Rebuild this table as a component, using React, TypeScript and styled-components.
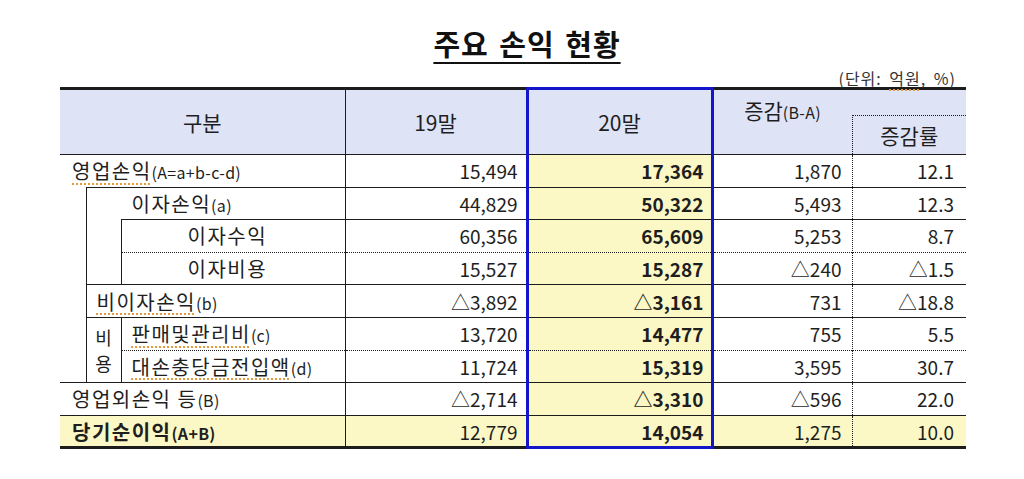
import React from 'react';
import styled, { createGlobalStyle } from 'styled-components';

const GlobalStyle = createGlobalStyle`
  html, body {
    margin: 0;
    padding: 0;
    background: #ffffff;
  }
  body {
    font-family: "Noto Sans CJK KR", "Noto Sans", sans-serif;
    color: #1e1e1e;
  }
`;

const LINE = '#1c1c1c';
const BLUE = '#1414c8';
const HEAD_BG = '#dee3f6';
const YELLOW = '#fbf8c6';

const Page = styled.div`
  width: 906px;
  padding: 24px 0 0 60px;
`;

const Title = styled.h1`
  margin: 0;
  height: 38px;
  line-height: 38px;
  padding-left: 28px;
  text-align: center;
  font-size: 29px;
  font-weight: 700;
  letter-spacing: 1px;
  word-spacing: 3px;
  color: #111;
  text-decoration: underline;
  text-decoration-thickness: 2px;
  text-underline-offset: 6px;
`;

const Unit = styled.div`
  margin-top: 7px;
  height: 18px;
  line-height: 18px;
  padding-right: 10px;
  text-align: right;
  font-size: 16px;
  letter-spacing: 1px;
  word-spacing: 3px;
  color: #333;
`;

const Spell = styled.span`
  text-decoration: underline dotted #e39a3a;
  text-decoration-thickness: 2px;
  text-underline-offset: 4px;
`;

const Table = styled.table`
  width: 906px;
  table-layout: fixed;
  border-collapse: collapse;
  border-top: 3px solid ${LINE};
  border-bottom: 3px solid ${LINE};
`;

type Edge = 'solid' | 'dotted' | 'none';

const edge = (e?: Edge) =>
  e === 'solid' ? `1px solid ${LINE}` : e === 'dotted' ? `1px dotted ${LINE}` : 'none';

const Head = styled.th<{ $left?: Edge; $top?: Edge; $up?: number }>`
  background: ${HEAD_BG};
  font-weight: 400;
  font-size: 21px;
  text-align: center;
  vertical-align: middle;
  padding: 0 0 ${(p) => p.$up ?? 0}px 0;
  border-left: ${(p) => edge(p.$left)};
  border-top: ${(p) => edge(p.$top)};
  border-bottom: 1px solid ${LINE};
`;

const CurHead = styled(Head)`
  border-left: 3px solid ${BLUE};
  border-right: 3px solid ${BLUE};
  border-top: 3px solid ${BLUE};
`;

const HeadRow = styled.tr<{ $h: number }>`
  height: ${(p) => p.$h}px;
`;

const Row = styled.tr<{ $total?: boolean }>`
  height: 32.6px;
  background: ${(p) => (p.$total ? YELLOW : 'transparent')};
`;

const Label = styled.td<{ $top?: Edge; $pl: number; $bold?: boolean }>`
  padding: 0 0 0 ${(p) => p.$pl}px;
  font-size: 20px;
  font-weight: ${(p) => (p.$bold ? 700 : 400)};
  white-space: nowrap;
  letter-spacing: 1.5px;
  border-top: ${(p) => edge(p.$top)};
  vertical-align: middle;
`;

const Gutter = styled.td<{ $top?: Edge }>`
  padding: 0;
  border-top: ${(p) => edge(p.$top)};
  border-right: 1px solid ${LINE};
  text-align: center;
  vertical-align: middle;
  font-size: 18px;
  line-height: 26px;
`;

const Small = styled.span`
  font-size: 16px;
  letter-spacing: 0.3px;
`;

const Num = styled.td<{ $top?: Edge; $left?: Edge; $pr: number }>`
  padding: 0 ${(p) => p.$pr}px 0 0;
  text-align: right;
  font-size: 19px;
  border-top: ${(p) => edge(p.$top)};
  border-left: ${(p) => edge(p.$left)};
  vertical-align: middle;
  white-space: nowrap;
`;

const CurNum = styled(Num)<{ $last?: boolean }>`
  background: ${YELLOW};
  font-weight: 700;
  border-left: 3px solid ${BLUE};
  border-right: 3px solid ${BLUE};
  border-bottom: ${(p) => (p.$last ? `3px solid ${BLUE}` : 'none')};
`;

type Vals = [string, string, string, string];

const Nums = ({ v, top, last }: { v: Vals; top: Edge; last?: boolean }) => (
  <>
    <Num $top={top} $left="solid" $pr={8}>{v[0]}</Num>
    <CurNum $top={top} $pr={7} $last={last}>{v[1]}</CurNum>
    <Num $top={top} $pr={10}>{v[2]}</Num>
    <Num $top={top} $left="dotted" $pr={12}>{v[3]}</Num>
  </>
);

export default function App() {
  return (
    <Page>
      <GlobalStyle />
      <Title>주요 손익 현황</Title>
      <Unit>
        (단위: <Spell>억원</Spell>, %)
      </Unit>
      <Table>
        <colgroup>
          <col style={{ width: 26 }} />
          <col style={{ width: 35 }} />
          <col style={{ width: 224 }} />
          <col style={{ width: 182 }} />
          <col style={{ width: 185 }} />
          <col style={{ width: 140 }} />
          <col style={{ width: 114 }} />
        </colgroup>
        <thead>
          <HeadRow $h={27}>
            <Head colSpan={3} rowSpan={2}>구분</Head>
            <Head rowSpan={2} $left="solid">19말</Head>
            <CurHead rowSpan={2}>20말</CurHead>
            <Head rowSpan={2} $up={24}>
              증감<Small>(B-A)</Small>
            </Head>
            <Head style={{ borderBottom: 'none' }} />
          </HeadRow>
          <HeadRow $h={39}>
            <Head $left="dotted" $top="dotted">
              증감률
            </Head>
          </HeadRow>
        </thead>
        <tbody>
          <Row>
            <Label colSpan={3} $top="solid" $pl={12}>
              <Spell>영업손익</Spell>
              <Small>(A=a+b-c-d)</Small>
            </Label>
            <Nums top="solid" v={['15,494', '17,364', '1,870', '12.1']} />
          </Row>
          <Row>
            <Gutter rowSpan={6} />
            <Label colSpan={2} $top="solid" $pl={45}>
              이자손익<Small>(a)</Small>
            </Label>
            <Nums top="solid" v={['44,829', '50,322', '5,493', '12.3']} />
          </Row>
          <Row>
            <Gutter rowSpan={2} />
            <Label $top="solid" $pl={66}>이자수익</Label>
            <Nums top="solid" v={['60,356', '65,609', '5,253', '8.7']} />
          </Row>
          <Row>
            <Label $top="dotted" $pl={66}>이자비용</Label>
            <Nums top="dotted" v={['15,527', '15,287', '△240', '△1.5']} />
          </Row>
          <Row>
            <Label colSpan={2} $top="solid" $pl={10}>
              <Spell>비이자손익</Spell>
              <Small>(b)</Small>
            </Label>
            <Nums top="solid" v={['△3,892', '△3,161', '731', '△18.8']} />
          </Row>
          <Row>
            <Gutter rowSpan={2} $top="solid">
              비<br />용
            </Gutter>
            <Label $top="solid" $pl={10}>
              <Spell>판매및관리비</Spell>
              <Small>(c)</Small>
            </Label>
            <Nums top="solid" v={['13,720', '14,477', '755', '5.5']} />
          </Row>
          <Row>
            <Label $top="dotted" $pl={10}>
              <Spell>대손충당금전입액</Spell>
              <Small>(d)</Small>
            </Label>
            <Nums top="dotted" v={['11,724', '15,319', '3,595', '30.7']} />
          </Row>
          <Row>
            <Label colSpan={3} $top="solid" $pl={12}>
              영업외손익 등<Small>(B)</Small>
            </Label>
            <Nums top="solid" v={['△2,714', '△3,310', '△596', '22.0']} />
          </Row>
          <Row $total>
            <Label colSpan={3} $top="solid" $pl={12} $bold>
              당기순이익<Small>(A+B)</Small>
            </Label>
            <Nums top="solid" last v={['12,779', '14,054', '1,275', '10.0']} />
          </Row>
        </tbody>
      </Table>
    </Page>
  );
}
